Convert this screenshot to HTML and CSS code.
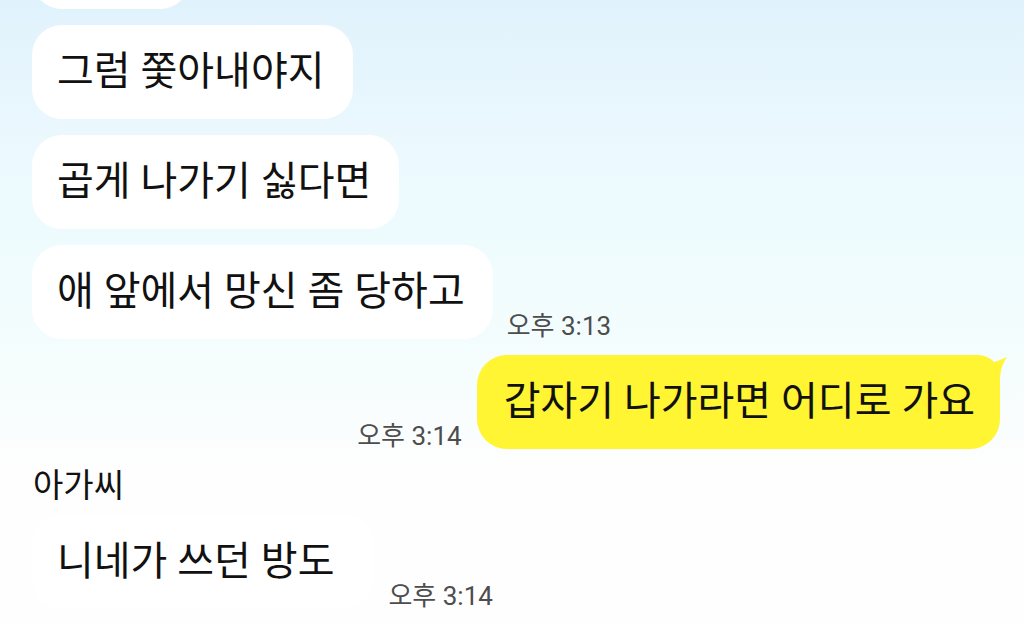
FILE: index.html
```html
<!DOCTYPE html>
<html lang="ko">
<head>
    <meta charset="UTF-8">
    <meta name="viewport" content="width=device-width, initial-scale=1.0">
    <title>채팅</title>
    <link rel="stylesheet" href="styles.css">
</head>
<body>
    <div class="chat">
        <!-- 위로 잘린 말풍선 (글자는 화면 밖) -->
        <div class="row">
            <div class="bubble partial"></div>
        </div>
        <div class="row">
            <div class="bubble">그럼 쫓아내야지</div>
        </div>
        <div class="row">
            <div class="bubble">곱게 나가기 싫다면</div>
        </div>
        <div class="row">
            <div class="bubble">애 앞에서 망신 좀 당하고</div>
            <span class="time">오후 3:13</span>
        </div>

        <!-- 내 메시지 -->
        <div class="row me">
            <span class="time">오후 3:14</span>
            <div class="bubble yellow">갑자기 나가라면 어디로 가요</div>
        </div>

        <div class="name">아가씨</div>
        <div class="row">
            <div class="bubble last">니네가 쓰던 방도</div>
            <span class="time">오후 3:14</span>
        </div>
    </div>
</body>
</html>
```

FILE: styles.css
```css
body {
    margin: 0;
    padding: 0;
    height: 623px;
    overflow: hidden;
    font-family: "Roboto", "Noto Sans CJK KR", sans-serif;
    color: #111;
    background: linear-gradient(#e0f2fc 0, #ebf8fe 140px, #effcfe 250px, #f6fdfd 380px, #fefefe 470px);
}
.chat {
    display: flex;
    flex-direction: column;
    gap: 16px;
    margin-top: -85px;
    padding: 0 24px 0 32px;
}
.row {
    display: flex;
    align-items: flex-end;
    gap: 14px;
}
.row.me {
    justify-content: flex-end;
    gap: 15px;
}
.bubble {
    position: relative;
    background-color: #ffffff;
    border-radius: 30px;
    padding: 22px 28px 22px 25px;
    font-size: 40px;
    line-height: 50px;
    white-space: nowrap;
}
.bubble.partial {
    width: 105px;
    height: 50px;
}
.bubble.yellow {
    background-color: #fff533;
    border-top-right-radius: 22px;
    padding-left: 27px;
    padding-right: 25px;
}
.bubble.yellow::after {
    content: "";
    position: absolute;
    top: 0;
    right: -7px;
    width: 20px;
    height: 22px;
    background-color: #fff533;
    clip-path: path('M3 8 Q12 6 20 2 Q14 10 13 22 L3 22 Z');
}
.bubble.last {
    padding-right: 40px;
}
.time {
    font-size: 26px;
    line-height: 1;
    color: #4d4d4d;
    white-space: nowrap;
}
.name {
    font-size: 33px;
    line-height: 40px;
    margin: 1px 0 -7px 1px;
}
```
